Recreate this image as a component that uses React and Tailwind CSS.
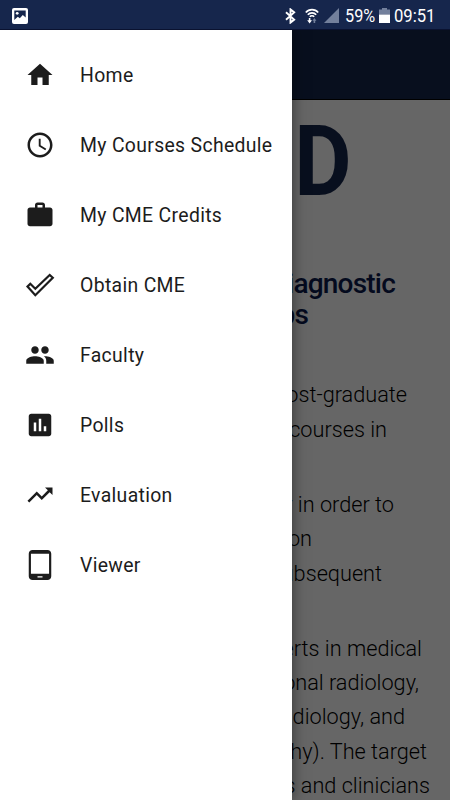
import React from 'react';
import {
    MdHome,
    MdAccessTime,
    MdWork,
    MdPeople,
    MdPoll,
    MdTrendingUp,
    MdTabletAndroid,
} from 'react-icons/md';

const CheckIcon = () => (
    <svg width="30" height="30" viewBox="0 0 30 30" fill="none" stroke="currentColor" strokeWidth="2.2">
        <path d="M2.5 16.6L5.3 13.8L10.3 18.8L24.7 4.9L27.8 7.8L10.3 25.2Z" />
    </svg>
);

const menuItems = [
    { label: 'Home', icon: <MdHome size={30} /> },
    { label: 'My Courses Schedule', icon: <MdAccessTime size={30} /> },
    { label: 'My CME Credits', icon: <MdWork size={30} /> },
    { label: 'Obtain CME', icon: <CheckIcon /> },
    { label: 'Faculty', icon: <MdPeople size={30} /> },
    { label: 'Polls', icon: <MdPoll size={30} /> },
    { label: 'Evaluation', icon: <MdTrendingUp size={30} /> },
    { label: 'Viewer', icon: <MdTabletAndroid size={30} /> },
];

const paragraphs = [
    [
        { text: 'post-graduate', pad: 'pr-[43px]' },
        { text: 'courses in', pad: 'pr-[63px]' },
    ],
    [
        { text: 'year in order to', pad: 'pr-[56px]' },
        { text: 'on', pad: 'pr-[138px]' },
        { text: 'subsequent', pad: 'pr-[68px]' },
    ],
    [
        { text: 'experts in medical', pad: 'pr-[28px]' },
        { text: 'interventional radiology,', pad: 'pr-[31px]' },
        { text: 'radiology, and', pad: 'pr-[45px]' },
        { text: 'radiography). The target', pad: 'pr-[23px]' },
        { text: 'radiologists and clinicians', pad: 'pr-[20px]' },
    ],
];

const StatusBar = () => (
    <div className="flex h-[30px] shrink-0 items-center justify-between border-b border-[#0a1230] bg-[#16264c] pt-[2px] pl-3 pr-[14px] text-white">
        <svg width="16" height="16" viewBox="0 0 16 16">
            <rect width="16" height="16" rx="2" fill="#fff" />
            <path d="M2.3 2.5H13.7V9.5L10.8 7L7.8 10.2L5.8 8.8L2.3 12Z" fill="#16264c" />
            <circle cx="5.2" cy="5.3" r="1.4" fill="#fff" />
        </svg>
        <div className="flex items-center">
            <svg width="11" height="16" viewBox="0 0 11 16" fill="none" stroke="#fff" strokeWidth="1.9" className="mr-[8px]">
                <path d="M1 4.2L9.2 11.6L5.5 14.6V1.4L9.2 4.4L1 11.8" />
            </svg>
            <svg width="16" height="16" viewBox="0 0 16 16" fill="none" stroke="#fff" strokeWidth="1.6" className="mr-[4px]">
                <path d="M1.8 4.6C5 0.6 11 0.6 14.2 4.6" />
                <path d="M3.8 6.8C6 4.2 10 4.2 12.2 6.8" />
                <path d="M5.8 8.8C7 7.4 9 7.4 10.2 8.8" />
                <path d="M5.6 10V13" />
                <path d="M3.2 12.2H8L5.6 15.6Z" fill="#fff" stroke="none" />
                <path d="M10.4 15V12" stroke="#73809c" />
                <path d="M8.4 12.8H12.4L10.4 10Z" fill="#73809c" stroke="none" />
            </svg>
            <svg width="15" height="15" viewBox="0 0 15 15" className="mr-[6px]">
                <path d="M15 0V15H0Z" fill="#73809c" />
            </svg>
            <span className="w-[30px] text-[18.5px] leading-[28px] whitespace-nowrap">
                <span className="inline-block origin-left scale-x-[0.88]">59%</span>
            </span>
            <svg width="11" height="15" viewBox="0 0 11 15" className="ml-[4px] mr-[4px]">
                <path d="M3 0H8V1.5H11V6.5H0V1.5H3Z" fill="#73809c" />
                <path d="M0 6.5H11V15H0Z" fill="#fff" />
            </svg>
            <span className="w-[42px] text-[18.5px] leading-[28px] whitespace-nowrap">
                <span className="inline-block origin-left scale-x-[0.9]">09:51</span>
            </span>
        </div>
    </div>
);

const Page = () => (
    <div className="h-full overflow-hidden bg-white">
        <div className="h-[70px] border-b border-black bg-[#16264c]"></div>
        <div className="flex h-[120px] justify-end pr-[98px] pt-[13px] text-[98px] leading-[98px] font-bold text-[#16264c]">
            <span className="inline-block origin-right scale-x-[0.9]">D</span>
        </div>
        <h1 className="flex h-[110px] flex-col pt-[48px] text-[28px] leading-[31px] font-medium tracking-[-0.8px] text-[#0b1a4d]">
            <span className="self-end pr-[55px]">of Diagnostic</span>
            <span className="self-end pr-[142px]">workshops</span>
        </h1>
        <div className="pt-[48.4px] text-[21.7px] leading-[34.4px] font-light text-black">
            {paragraphs.map((lines, index) => (
                <div key={index} className="mb-[40.6px] flex flex-col items-end">
                    {lines.map((line) => (
                        <span key={line.text} className={`whitespace-nowrap ${line.pad}`}>{line.text}</span>
                    ))}
                </div>
            ))}
        </div>
    </div>
);

const Drawer = () => (
    <nav className="absolute inset-y-0 left-0 w-[292px] bg-white pt-[10px] text-[#1c1c1c] shadow-[0_0_14px_rgba(0,0,0,0.5)]">
        {menuItems.map((item) => (
            <a key={item.label} className="flex h-[70px] items-center pl-[25px]">
                {item.icon}
                <span className="ml-[25px] pt-[2px] text-[19.4px] tracking-[0.33px] whitespace-nowrap">{item.label}</span>
            </a>
        ))}
    </nav>
);

const App = () => {
    return (
        <div className="flex h-[800px] w-[450px] flex-col overflow-hidden font-['Roboto',sans-serif]">
            <StatusBar />
            <div className="relative min-h-0 flex-1 overflow-hidden">
                <Page />
                <div className="absolute inset-0 bg-black/60"></div>
                <Drawer />
            </div>
        </div>
    );
};

export default App;
